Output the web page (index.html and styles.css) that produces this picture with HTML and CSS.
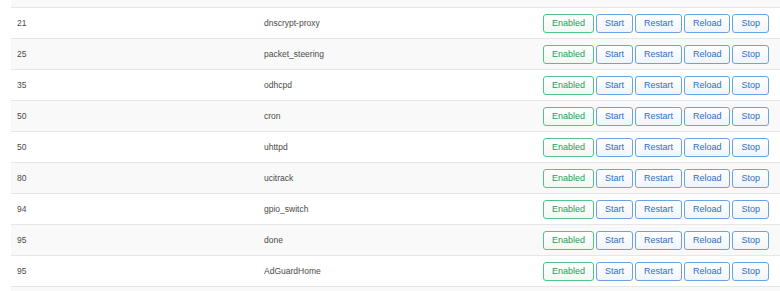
FILE: index.html
```html
<!DOCTYPE html>
<html>
<head>
<meta charset="utf-8">
<link rel="stylesheet" href="styles.css">
</head>
<body>
<div class="table">
  <div class="row alt stub"></div>
  <div class="row"><div class="prio">21</div><div class="name">dnscrypt-proxy</div><div class="actions"><button class="btn ok">Enabled</button><button class="btn">Start</button><button class="btn">Restart</button><button class="btn">Reload</button><button class="btn">Stop</button></div></div>
  <div class="row alt"><div class="prio">25</div><div class="name">packet_steering</div><div class="actions"><button class="btn ok">Enabled</button><button class="btn">Start</button><button class="btn">Restart</button><button class="btn">Reload</button><button class="btn">Stop</button></div></div>
  <div class="row"><div class="prio">35</div><div class="name">odhcpd</div><div class="actions"><button class="btn ok">Enabled</button><button class="btn">Start</button><button class="btn">Restart</button><button class="btn">Reload</button><button class="btn">Stop</button></div></div>
  <div class="row alt"><div class="prio">50</div><div class="name">cron</div><div class="actions"><button class="btn ok">Enabled</button><button class="btn">Start</button><button class="btn">Restart</button><button class="btn">Reload</button><button class="btn">Stop</button></div></div>
  <div class="row"><div class="prio">50</div><div class="name">uhttpd</div><div class="actions"><button class="btn ok">Enabled</button><button class="btn">Start</button><button class="btn">Restart</button><button class="btn">Reload</button><button class="btn">Stop</button></div></div>
  <div class="row alt"><div class="prio">80</div><div class="name">ucitrack</div><div class="actions"><button class="btn ok">Enabled</button><button class="btn">Start</button><button class="btn">Restart</button><button class="btn">Reload</button><button class="btn">Stop</button></div></div>
  <div class="row"><div class="prio">94</div><div class="name">gpio_switch</div><div class="actions"><button class="btn ok">Enabled</button><button class="btn">Start</button><button class="btn">Restart</button><button class="btn">Reload</button><button class="btn">Stop</button></div></div>
  <div class="row alt"><div class="prio">95</div><div class="name">done</div><div class="actions"><button class="btn ok">Enabled</button><button class="btn">Start</button><button class="btn">Restart</button><button class="btn">Reload</button><button class="btn">Stop</button></div></div>
  <div class="row"><div class="prio">95</div><div class="name">AdGuardHome</div><div class="actions"><button class="btn ok">Enabled</button><button class="btn">Start</button><button class="btn">Restart</button><button class="btn">Reload</button><button class="btn">Stop</button></div></div>
  <div class="row alt stub short"></div>
</div>
</body>
</html>
```

FILE: styles.css
```css
html, body {
  margin: 0;
  padding: 0;
  background: #fff;
  height: 291px;
  overflow: hidden;
}
body {
  font-family: "Liberation Sans", Arial, sans-serif;
  color: #4a4a4a;
}
.table {
  margin-left: 11px;
  margin-top: -23px;
  display: flex;
  flex-direction: column;
}
.row {
  display: grid;
  grid-template-columns: 247px 1fr auto;
  align-items: center;
  height: 30px;
  border-bottom: 1px solid #e6e6e6;
  background: #fff;
  font-size: 8.5px;
}
.row.alt {
  background: #f9f9f9;
}
.row.short {
  height: 4px;
  border-bottom: none;
}
.prio {
  padding-left: 6px;
}
.name {
  padding-left: 6px;
}
.actions {
  display: flex;
  gap: 2px;
  padding-right: 11px;
  padding-top: 1px;
}
.btn {
  font-family: "Liberation Sans", Arial, sans-serif;
  font-size: 9px;
  height: 19px;
  padding: 0 8px;
  margin: 0;
  border: 1px solid #6aa2e6;
  border-radius: 3px;
  background: linear-gradient(#ffffff, #f1f4f8);
  color: #2a6fc4;
  line-height: 17px;
}
.btn.ok {
  border-color: #4fc684;
  color: #1f9d55;
  background: linear-gradient(#ffffff, #f3f7f4);
}
```
